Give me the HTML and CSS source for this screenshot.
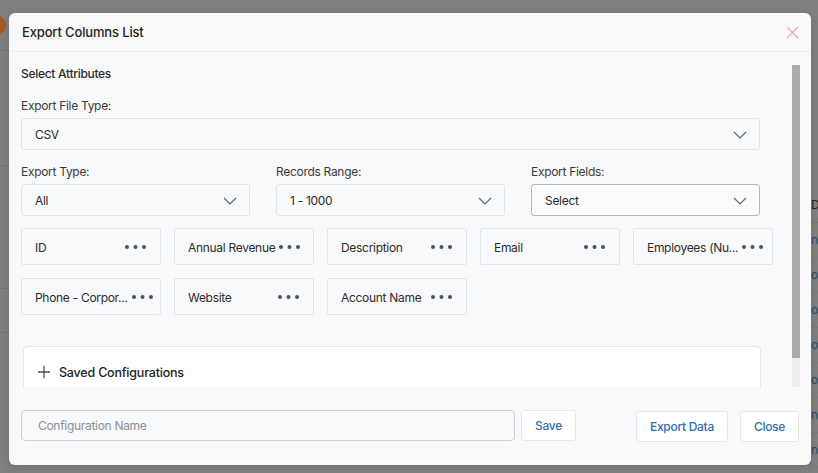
FILE: index.html
```html
<!DOCTYPE html>
<html>
<head>
    <title>Export Columns List</title>
    <link rel="stylesheet" href="styles.css">
</head>
<body>
    <div class="backdrop">
        <div class="avatar"></div>
        <div class="bg-lines">
            <div class="bg-line" style="top: 50px"></div>
            <div class="bg-line" style="top: 165px"></div>
            <div class="bg-line" style="top: 288px"></div>
            <div class="bg-line" style="top: 332px"></div>
        </div>
        <div class="bg-table">
            <div class="bg-head">D</div>
            <div class="bg-row">n</div>
            <div class="bg-row">o</div>
            <div class="bg-row">o</div>
            <div class="bg-row">o</div>
            <div class="bg-row">o</div>
            <div class="bg-row">n</div>
            <div class="bg-row">n</div>
        </div>
    </div>

    <div class="modal">
        <div class="modal-header">
            <h2>Export Columns List</h2>
            <svg class="close-x" width="13" height="13" viewBox="0 0 13 13">
                <path d="M1 1 L12 12 M12 1 L1 12" stroke="#f2a3a3" stroke-width="1.1" fill="none"/>
            </svg>
        </div>

        <div class="modal-body">
            <div class="modal-content">
                <div class="section-title">Select Attributes</div>

                <label class="field-label">Export File Type:</label>
                <div class="select">
                    <span>CSV</span>
                    <svg class="chevron" width="14" height="8" viewBox="0 0 14 8"><path d="M1 1 L7 7 L13 1" stroke="#5f656d" stroke-width="1.2" fill="none"/></svg>
                </div>

                <div class="field-row">
                    <div>
                        <label class="field-label">Export Type:</label>
                        <div class="select">
                            <span>All</span>
                            <svg class="chevron" width="14" height="8" viewBox="0 0 14 8"><path d="M1 1 L7 7 L13 1" stroke="#5f656d" stroke-width="1.2" fill="none"/></svg>
                        </div>
                    </div>
                    <div>
                        <label class="field-label">Records Range:</label>
                        <div class="select">
                            <span>1 - 1000</span>
                            <svg class="chevron" width="14" height="8" viewBox="0 0 14 8"><path d="M1 1 L7 7 L13 1" stroke="#5f656d" stroke-width="1.2" fill="none"/></svg>
                        </div>
                    </div>
                    <div>
                        <label class="field-label">Export Fields:</label>
                        <div class="select select-active">
                            <span>Select</span>
                            <svg class="chevron" width="14" height="8" viewBox="0 0 14 8"><path d="M1 1 L7 7 L13 1" stroke="#5f656d" stroke-width="1.2" fill="none"/></svg>
                        </div>
                    </div>
                </div>

                <div class="chips">
                    <div class="chip"><span>ID</span><svg class="dots" width="23" height="6" viewBox="0 0 23 6"><circle cx="3" cy="3" r="2"/><circle cx="11.5" cy="3" r="2"/><circle cx="20" cy="3" r="2"/></svg></div>
                    <div class="chip"><span>Annual Revenue</span><svg class="dots" width="23" height="6" viewBox="0 0 23 6"><circle cx="3" cy="3" r="2"/><circle cx="11.5" cy="3" r="2"/><circle cx="20" cy="3" r="2"/></svg></div>
                    <div class="chip"><span>Description</span><svg class="dots" width="23" height="6" viewBox="0 0 23 6"><circle cx="3" cy="3" r="2"/><circle cx="11.5" cy="3" r="2"/><circle cx="20" cy="3" r="2"/></svg></div>
                    <div class="chip"><span>Email</span><svg class="dots" width="23" height="6" viewBox="0 0 23 6"><circle cx="3" cy="3" r="2"/><circle cx="11.5" cy="3" r="2"/><circle cx="20" cy="3" r="2"/></svg></div>
                    <div class="chip"><span>Employees (Nu...</span><svg class="dots" width="23" height="6" viewBox="0 0 23 6"><circle cx="3" cy="3" r="2"/><circle cx="11.5" cy="3" r="2"/><circle cx="20" cy="3" r="2"/></svg></div>
                    <div class="chip"><span>Phone - Corpor...</span><svg class="dots" width="23" height="6" viewBox="0 0 23 6"><circle cx="3" cy="3" r="2"/><circle cx="11.5" cy="3" r="2"/><circle cx="20" cy="3" r="2"/></svg></div>
                    <div class="chip"><span>Website</span><svg class="dots" width="23" height="6" viewBox="0 0 23 6"><circle cx="3" cy="3" r="2"/><circle cx="11.5" cy="3" r="2"/><circle cx="20" cy="3" r="2"/></svg></div>
                    <div class="chip"><span>Account Name</span><svg class="dots" width="23" height="6" viewBox="0 0 23 6"><circle cx="3" cy="3" r="2"/><circle cx="11.5" cy="3" r="2"/><circle cx="20" cy="3" r="2"/></svg></div>
                </div>

                <div class="saved-configs">
                    <svg class="plus" width="12" height="12" viewBox="0 0 12 12"><path d="M6 0 V12 M0 6 H12" stroke="#4a4f56" stroke-width="1.3" fill="none"/></svg>
                    <span>Saved Configurations</span>
                </div>
            </div>
            <div class="scrollbar"><div class="scroll-thumb"></div></div>
        </div>

        <div class="modal-footer">
            <input class="config-input" type="text" placeholder="Configuration Name">
            <button class="btn">Save</button>
            <div class="footer-right">
                <button class="btn">Export Data</button>
                <button class="btn">Close</button>
            </div>
        </div>
    </div>
</body>
</html>
```

FILE: styles.css
```css
body {
    margin: 0;
    width: 818px;
    height: 473px;
    overflow: hidden;
    background-color: #808080;
    font-family: 'Inter', 'Noto Sans', sans-serif;
    color: #333;
    letter-spacing: -0.3px;
}

.backdrop {
    position: relative;
    width: 818px;
    height: 473px;
}

.avatar {
    position: absolute;
    left: -14px;
    top: 15px;
    width: 20px;
    height: 20px;
    border-radius: 50%;
    background: #a85a20;
}

.bg-line {
    position: absolute;
    left: 0;
    width: 12px;
    height: 1px;
    background: #767676;
}

.bg-table {
    position: absolute;
    left: 811px;
    top: 188px;
    width: 7px;
    font-size: 12px;
}

.bg-head {
    height: 34px;
    line-height: 34px;
    color: #262626;
    border-bottom: 1px solid #737373;
}

.bg-row {
    height: 34px;
    line-height: 34px;
    color: #264872;
    border-bottom: 1px solid #787878;
}

.modal {
    position: absolute;
    left: 9px;
    top: 13px;
    width: 802px;
    height: 452px;
    background: #f8f9fb;
    border-radius: 6px;
    box-shadow: 0 2px 10px rgba(0, 0, 0, 0.15);
    display: flex;
    flex-direction: column;
    overflow: hidden;
}

.modal-header {
    height: 38px;
    flex-shrink: 0;
    display: flex;
    align-items: center;
    justify-content: space-between;
    padding: 0 12px 0 13px;
    border-bottom: 1px solid #eceef2;
}

.modal-header h2 {
    margin: 0;
    font-size: 13px;
    font-weight: 500;
    letter-spacing: -0.15px;
    color: #222;
}

.close-x {
    margin-top: 1px;
}

.modal-body {
    height: 335px;
    flex-shrink: 0;
    display: flex;
    overflow: hidden;
}

.modal-content {
    width: 752px;
    padding-left: 12px;
    flex-shrink: 0;
}

.section-title {
    margin-top: 14px;
    font-size: 12px;
    font-weight: 500;
    line-height: 15px;
    color: #2b2b2b;
}

.field-label {
    display: block;
    font-size: 12px;
    line-height: 15px;
    color: #3a3a3a;
    margin-top: 17px;
    margin-bottom: 5px;
}

.select {
    width: 739px;
    height: 32px;
    box-sizing: border-box;
    border: 1px solid #dfe3e8;
    border-radius: 3px;
    background: #f8f9fb;
    display: flex;
    align-items: center;
    justify-content: space-between;
    padding: 0 12px 0 13px;
    font-size: 12px;
    color: #2b2b2b;
}

.select-active {
    border-color: #b3b8bf;
    background: #fafbfc;
}

.chevron {
    margin-top: 1px;
}

.field-row {
    display: grid;
    grid-template-columns: 229px 229px 229px;
    column-gap: 26px;
}

.field-row .field-label {
    margin-top: 14px;
}

.field-row .select {
    width: 229px;
}

.chips {
    display: grid;
    grid-template-columns: repeat(5, 140px);
    gap: 13px;
    margin-top: 12px;
}

.chip {
    height: 37px;
    box-sizing: border-box;
    border: 1px solid #e1e5ea;
    border-radius: 2px;
    background: #f8f9fb;
    display: flex;
    align-items: center;
    justify-content: space-between;
    padding: 0 13px 0 13px;
    font-size: 12px;
    color: #2b2b2b;
    white-space: nowrap;
    overflow: hidden;
}

.chip span {
    line-height: 15px;
    padding-top: 1px;
}

.dots {
    fill: #4a5260;
    flex-shrink: 0;
    margin-left: 3px;
}

.saved-configs {
    width: 738px;
    height: 60px;
    box-sizing: border-box;
    margin: 31px 0 0 2px;
    background: #fff;
    border: 1px solid #e2e5e9;
    border-radius: 4px;
    display: flex;
    align-items: flex-start;
    padding: 18px 0 0 14px;
    font-size: 12.5px;
    font-weight: 500;
    letter-spacing: -0.2px;
    color: #222;
}

.plus {
    margin: 1px 9px 0 0;
}

.scrollbar {
    width: 8px;
    margin: 13px 0 0 19px;
    background: #efefef;
}

.scroll-thumb {
    height: 293px;
    background: #ababab;
}

.modal-footer {
    flex: 1;
    display: flex;
    align-items: flex-start;
    padding: 23px 12px 0 12px;
}

.config-input {
    width: 494px;
    height: 31px;
    box-sizing: border-box;
    border: 1px solid #c9d0d8;
    border-radius: 4px;
    background: #f8f9fb;
    padding: 0 16px;
    font-family: inherit;
    font-size: 12px;
    letter-spacing: -0.3px;
    color: #333;
    outline: none;
}

.config-input::placeholder {
    color: #8a9099;
}

.btn {
    height: 31px;
    box-sizing: border-box;
    background: #fff;
    border: 1px solid #e3e6ea;
    border-radius: 3px;
    padding: 0 13px;
    font-family: inherit;
    font-size: 12px;
    font-weight: 500;
    letter-spacing: -0.3px;
    color: #2f6cb0;
    margin-left: 6px;
}

.footer-right {
    margin-left: auto;
    display: flex;
    gap: 12px;
}

.footer-right .btn {
    margin-left: 0;
    margin-top: 1px;
}
```
